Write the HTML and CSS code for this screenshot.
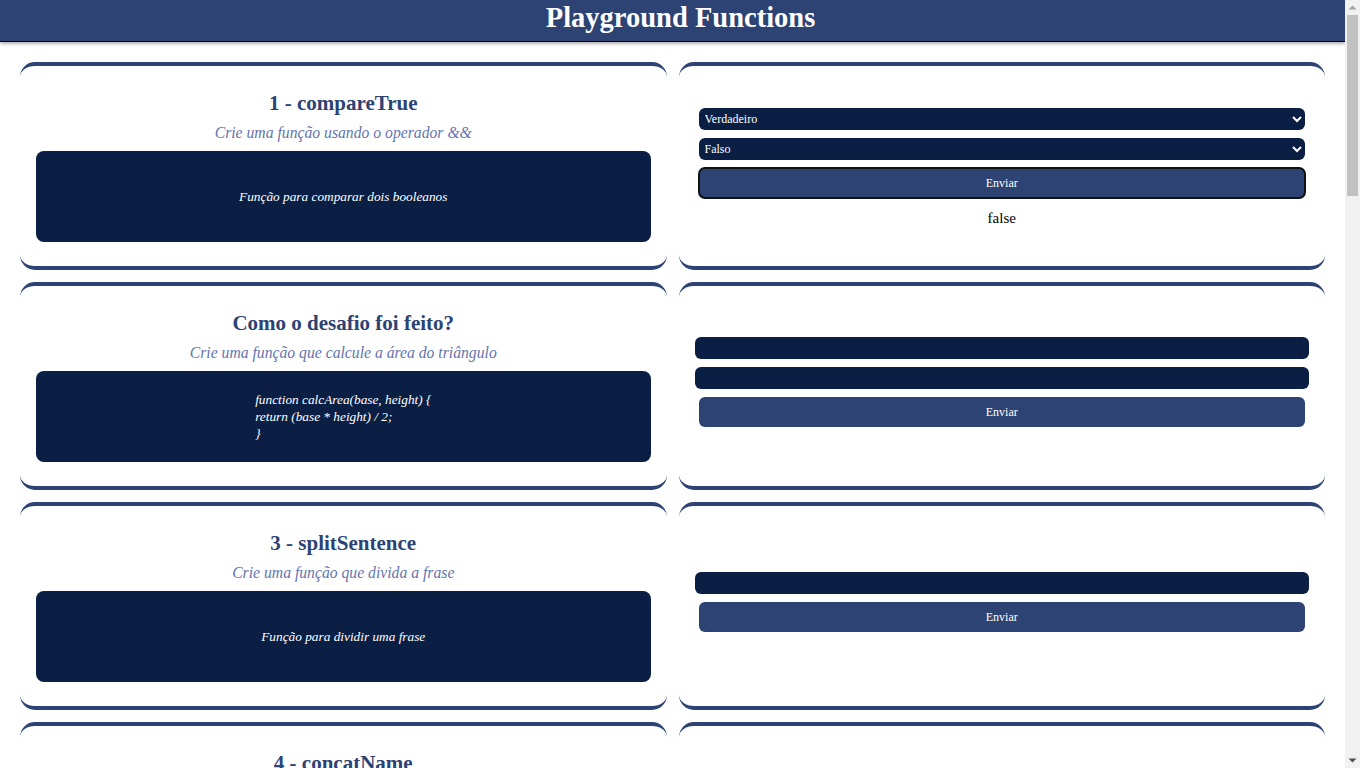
FILE: index.html
```html
<!DOCTYPE html>
<html lang="pt-BR">
<head>
<meta charset="utf-8">
<title>Playground Functions</title>
<link rel="stylesheet" href="styles.css">
</head>
<body>
<div class="page">
<header class="topbar">
  <h1 class="topbar-title">Playground Functions</h1>
</header>
<main class="grid">
  <section class="card card-info">
    <h2 class="card-title">1 - compareTrue</h2>
    <p class="card-sub">Crie uma função usando o operador &amp;&amp;</p>
    <div class="card-box"><p class="box-text">Função para comparar dois booleanos</p></div>
  </section>
  <section class="card card-form">
    <select class="field field-select">
      <option>Verdadeiro</option>
      <option>Falso</option>
    </select>
    <select class="field field-select">
      <option>Falso</option>
      <option>Verdadeiro</option>
    </select>
    <button class="btn btn-focus">Enviar</button>
    <p class="result">false</p>
  </section>

  <section class="card card-info">
    <h2 class="card-title">Como o desafio foi feito?</h2>
    <p class="card-sub">Crie uma função que calcule a área do triângulo</p>
    <div class="card-box"><pre class="box-code">function calcArea(base, height) {
return (base * height) / 2;
}</pre></div>
  </section>
  <section class="card card-form">
    <input class="field field-input" type="text">
    <input class="field field-input" type="text">
    <button class="btn">Enviar</button>
    <p class="result"></p>
  </section>

  <section class="card card-info">
    <h2 class="card-title">3 - splitSentence</h2>
    <p class="card-sub">Crie uma função que divida a frase</p>
    <div class="card-box"><p class="box-text">Função para dividir uma frase</p></div>
  </section>
  <section class="card card-form">
    <input class="field field-input" type="text">
    <button class="btn">Enviar</button>
    <p class="result"></p>
  </section>

  <section class="card card-info">
    <h2 class="card-title">4 - concatName</h2>
    <p class="card-sub">Crie uma função que concatene o primeiro e o último nome</p>
    <div class="card-box"><p class="box-text">Função para concatenar nomes</p></div>
  </section>
  <section class="card card-form">
    <input class="field field-input" type="text">
    <button class="btn">Enviar</button>
    <p class="result"></p>
  </section>

  <section class="card card-info">
    <h2 class="card-title">5 - footballPoints</h2>
    <p class="card-sub">Crie uma função que calcule os pontos de um time</p>
    <div class="card-box"><p class="box-text">Função para calcular pontos</p></div>
  </section>
  <section class="card card-form">
    <input class="field field-input" type="text">
    <input class="field field-input" type="text">
    <button class="btn">Enviar</button>
    <p class="result"></p>
  </section>

  <section class="card card-info">
    <h2 class="card-title">6 - highestCount</h2>
    <p class="card-sub">Crie uma função que conte o maior número</p>
    <div class="card-box"><p class="box-text">Função para contar o maior número</p></div>
  </section>
  <section class="card card-form">
    <input class="field field-input" type="text">
    <button class="btn">Enviar</button>
    <p class="result"></p>
  </section>

  <section class="card card-info">
    <h2 class="card-title">7 - catAndMouse</h2>
    <p class="card-sub">Crie uma função que diga qual gato pega o rato</p>
    <div class="card-box"><p class="box-text">Função para o gato e o rato</p></div>
  </section>
  <section class="card card-form">
    <input class="field field-input" type="text">
    <input class="field field-input" type="text">
    <button class="btn">Enviar</button>
    <p class="result"></p>
  </section>

  <section class="card card-info">
    <h2 class="card-title">8 - fizzBuzz</h2>
    <p class="card-sub">Crie uma função que retorne fizz, buzz ou fizzBuzz</p>
    <div class="card-box"><p class="box-text">Função fizzBuzz</p></div>
  </section>
  <section class="card card-form">
    <input class="field field-input" type="text">
    <button class="btn">Enviar</button>
    <p class="result"></p>
  </section>

  <section class="card card-info">
    <h2 class="card-title">9 - encode</h2>
    <p class="card-sub">Crie uma função que codifique a frase</p>
    <div class="card-box"><p class="box-text">Função para codificar uma frase</p></div>
  </section>
  <section class="card card-form">
    <input class="field field-input" type="text">
    <button class="btn">Enviar</button>
    <p class="result"></p>
  </section>

  <section class="card card-info">
    <h2 class="card-title">10 - decode</h2>
    <p class="card-sub">Crie uma função que decodifique a frase</p>
    <div class="card-box"><p class="box-text">Função para decodificar uma frase</p></div>
  </section>
  <section class="card card-form">
    <input class="field field-input" type="text">
    <button class="btn">Enviar</button>
    <p class="result"></p>
  </section>

  <section class="card card-info">
    <h2 class="card-title">11 - techList</h2>
    <p class="card-sub">Crie uma função que ordene a lista de tecnologias</p>
    <div class="card-box"><p class="box-text">Função para ordenar tecnologias</p></div>
  </section>
  <section class="card card-form">
    <input class="field field-input" type="text">
    <input class="field field-input" type="text">
    <button class="btn">Enviar</button>
    <p class="result"></p>
  </section>

  <section class="card card-info">
    <h2 class="card-title">12 - generatePhoneNumber</h2>
    <p class="card-sub">Crie uma função que gere um número de telefone</p>
    <div class="card-box"><p class="box-text">Função para gerar um telefone</p></div>
  </section>
  <section class="card card-form">
    <input class="field field-input" type="text">
    <button class="btn">Enviar</button>
    <p class="result"></p>
  </section>

  <section class="card card-info">
    <h2 class="card-title">13 - triangleCheck</h2>
    <p class="card-sub">Crie uma função que verifique o triângulo</p>
    <div class="card-box"><p class="box-text">Função para verificar um triângulo</p></div>
  </section>
  <section class="card card-form">
    <input class="field field-input" type="text">
    <input class="field field-input" type="text">
    <button class="btn">Enviar</button>
    <p class="result"></p>
  </section>

  <section class="card card-info">
    <h2 class="card-title">14 - hydrate</h2>
    <p class="card-sub">Crie uma função que recomende copos de água</p>
    <div class="card-box"><p class="box-text">Função para se hidratar</p></div>
  </section>
  <section class="card card-form">
    <input class="field field-input" type="text">
    <button class="btn">Enviar</button>
    <p class="result"></p>
  </section>
</main>
</div>
<div class="scrollbar" aria-hidden="true">
  <div class="scroll-btn">
    <svg width="15" height="15" viewBox="0 0 15 15"><path d="M3.5 9.5 L7.5 5.5 L11.5 9.5 Z" fill="#a3a3a3"/></svg>
  </div>
  <div class="scroll-track"><div class="scroll-thumb"></div></div>
  <div class="scroll-btn">
    <svg width="15" height="15" viewBox="0 0 15 15"><path d="M3.5 5.5 L11.5 5.5 L7.5 9.5 Z" fill="#505050"/></svg>
  </div>
</div>
</body>
</html>
```

FILE: styles.css
```css
* { box-sizing: border-box; }

body {
  margin: 0;
  font-family: "Liberation Serif", "DejaVu Serif", serif;
  background: #ffffff;
}

.page { margin-right: 15px; }

.scrollbar {
  position: fixed;
  top: 0;
  right: 0;
  width: 15px;
  height: 100vh;
  background: #f1f1f1;
  display: flex;
  flex-direction: column;
  z-index: 10;
}

.scroll-btn { height: 15px; display: flex; }

.scroll-track { flex: 1; padding: 0 2px; }

.scroll-thumb {
  height: 181px;
  background: #c1c1c1;
}

.topbar {
  height: 42px;
  padding: 0 0 6px 16px;
  background: #2c4373;
  border-bottom: 1px solid #000;
  box-shadow: 0 2px 3px rgba(0, 0, 0, 0.3);
  display: flex;
  align-items: center;
  justify-content: center;
}

.topbar-title {
  margin: 0;
  color: #ffffff;
  font-size: 28.5px;
  font-weight: bold;
  line-height: 36px;
}

.grid {
  display: grid;
  grid-template-columns: 1fr 1fr;
  gap: 12px;
  padding: 20px;
}

.card {
  height: 208px;
  background: #fff;
  border-top: 4px solid #2c4373;
  border-bottom: 4px solid #2c4373;
  border-radius: 15px;
  padding: 0 16px;
  display: flex;
  flex-direction: column;
  justify-content: center;
}

.card-info { align-items: stretch; text-align: center; }

.card-title {
  margin: 0;
  color: #2c4373;
  font-size: 21px;
  line-height: 26px;
  font-weight: bold;
}

.card-sub {
  margin: 7px 0 8px;
  color: #6474ad;
  font-style: italic;
  font-size: 15.7px;
  line-height: 20px;
}

.card-box {
  height: 91px;
  background: #0b1f45;
  border-radius: 8px;
  display: flex;
  align-items: center;
  justify-content: center;
  color: #ffffff;
  font-style: italic;
  font-size: 13.3px;
}

.box-text { margin: 0; }

.box-code {
  margin: 0;
  font-family: "Liberation Serif", "DejaVu Serif", serif;
  font-style: italic;
  font-size: 13.3px;
  line-height: 17px;
  text-align: left;
}

.card-form { gap: 8px; }

.field {
  display: block;
  height: 22px;
  background: #0b1f45;
  color: #ffffff;
  border: none;
  border-radius: 6px;
  font-family: "Liberation Serif", "DejaVu Serif", serif;
  font-size: 12px;
}

.field-select { margin: 0 4px; padding: 0 2px; }

.field-input { width: 100%; }

.btn {
  display: block;
  height: 30px;
  margin: 0 4px;
  background: #2c4373;
  color: #ffffff;
  border: none;
  border-radius: 6px;
  font-family: "Liberation Serif", "DejaVu Serif", serif;
  font-size: 12px;
}

.btn-focus {
  outline: 2px solid #111;
  outline-offset: -1px;
}

.result {
  margin: 3px 0 -3px;
  text-align: center;
  font-size: 15px;
  line-height: 18px;
  color: #000;
}
```
